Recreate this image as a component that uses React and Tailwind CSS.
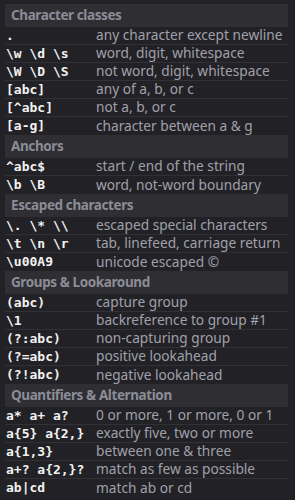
import React from 'react';

const sections = [
  {
    title: 'Character classes',
    rows: [
      ['.', 'any character except newline'],
      ['\\w \\d \\s', 'word, digit, whitespace'],
      ['\\W \\D \\S', 'not word, digit, whitespace'],
      ['[abc]', 'any of a, b, or c'],
      ['[^abc]', 'not a, b, or c'],
      ['[a-g]', 'character between a & g'],
    ],
  },
  {
    title: 'Anchors',
    rows: [
      ['^abc$', 'start / end of the string'],
      ['\\b \\B', 'word, not-word boundary'],
    ],
  },
  {
    title: 'Escaped characters',
    rows: [
      ['\\. \\* \\\\', 'escaped special characters'],
      ['\\t \\n \\r', 'tab, linefeed, carriage return'],
      ['\\u00A9', 'unicode escaped ©'],
    ],
  },
  {
    title: 'Groups & Lookaround',
    rows: [
      ['(abc)', 'capture group'],
      ['\\1', 'backreference to group #1'],
      ['(?:abc)', 'non-capturing group'],
      ['(?=abc)', 'positive lookahead'],
      ['(?!abc)', 'negative lookahead'],
    ],
  },
  {
    title: 'Quantifiers & Alternation',
    rows: [
      ['a* a+ a?', '0 or more, 1 or more, 0 or 1'],
      ['a{5} a{2,}', 'exactly five, two or more'],
      ['a{1,3}', 'between one & three'],
      ['a+? a{2,}?', 'match as few as possible'],
      ['ab|cd', 'match ab or cd'],
    ],
  },
];

function Section({ title, rows }) {
  return (
    <div>
      {/* section heading */}
      <div className="h-[23px] flex items-center px-[6px] bg-[#2e2e33] text-[13.5px] font-bold tracking-[-0.4px] text-[#8c8c96]">
        {title}
      </div>
      <div className="divide-y divide-[#313136]">
        {rows.map(([code, desc]) => (
          <div key={code} className="h-[18px] flex items-center">
            <span className="w-[91px] shrink-0 pl-[1px] font-['DejaVu_Sans_Mono',monospace] font-bold text-[13px] text-[#f2f2f2] whitespace-pre">
              {code}
            </span>
            <span className="text-[13.7px] text-[#a0a0aa] whitespace-nowrap">{desc}</span>
          </div>
        ))}
      </div>
    </div>
  );
}

export default function App() {
  return (
    <div className="w-[295px] h-[500px] bg-[#222226] pt-[4px] px-[5px] overflow-hidden font-['Noto_Sans',sans-serif]">
      <div className="w-[283px]">
        {sections.map((s) => (
          <Section key={s.title} title={s.title} rows={s.rows} />
        ))}
      </div>
    </div>
  );
}
